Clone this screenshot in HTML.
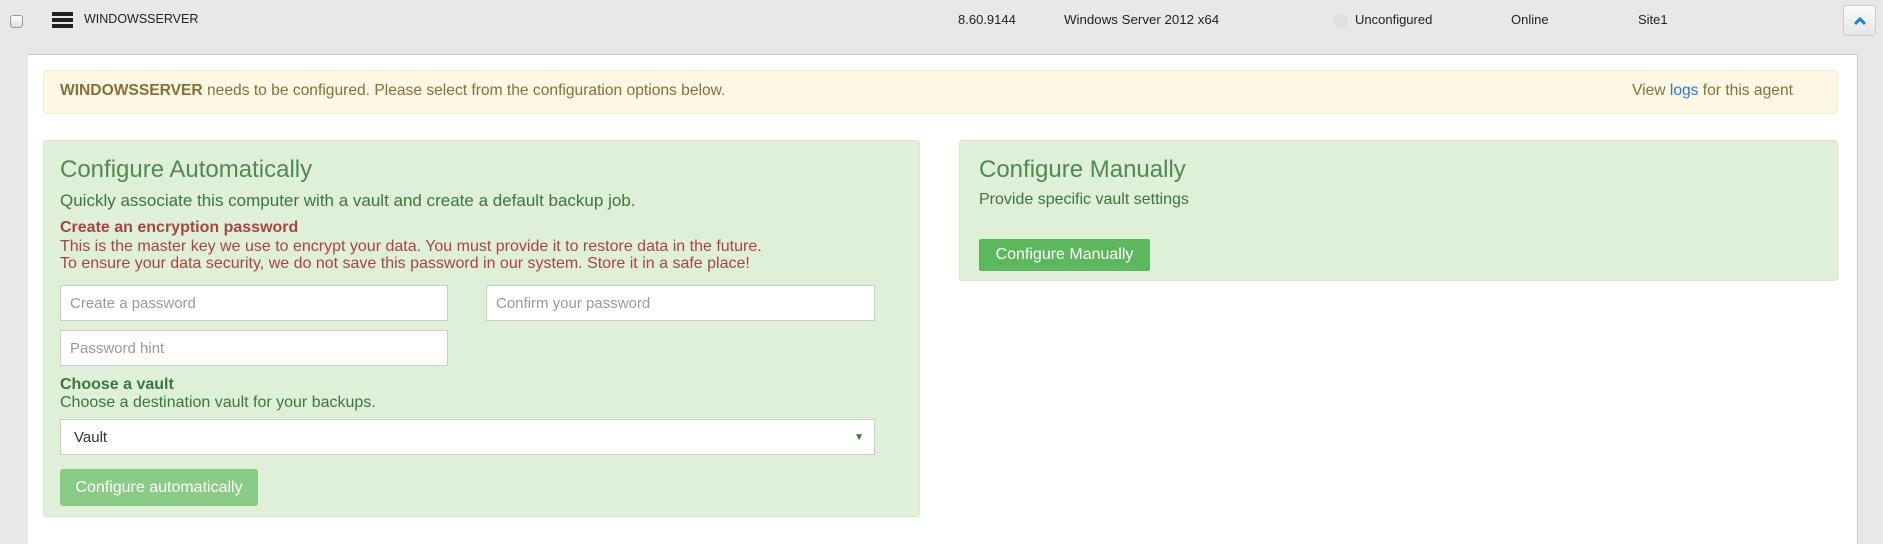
<!DOCTYPE html>
<html><head><meta charset="utf-8"><style>
*{box-sizing:border-box;margin:0;padding:0}
body{width:1883px;height:533px;overflow:hidden;background:#e8e8e8;font-family:"Liberation Sans",sans-serif;position:relative}
.a{position:absolute;white-space:nowrap}
.hdr{font-size:13px;color:#222;top:12px}
.panel{position:absolute;left:28px;top:54px;width:1830px;height:490px;background:#fff;border-top:1px solid #c8c8c8;border-right:1px solid #c8c8c8}
.alert{position:absolute;left:43px;top:70px;width:1795px;height:44px;background:#fcf8e3;border:1px solid #faebcc;border-radius:3px}
.box{position:absolute;background:#dff0d8;border:1px solid #d6e9c6;border-radius:3px}
.title{font-size:24px;color:#4f8a4f;font-weight:300}
.g{color:#3c763d;font-size:16px}
.r{color:#a94442;font-size:16px}
.inp{position:absolute;background:#fff;border:1px solid #ccc;font-size:15px;color:#999;padding-left:9px;display:flex;align-items:center}
.btn{position:absolute;color:#fff;font-size:16px;display:flex;align-items:center;justify-content:center;border-radius:3px}
</style></head><body>
<div class="a" style="left:10px;top:15px;width:13px;height:13px;border:1px solid #999;border-radius:3px;background:linear-gradient(#fff,#ddd)"></div>
<div class="a" style="left:52px;top:12px;width:21px;height:16px">
<div style="height:4px;background:#222;margin-bottom:2px"></div><div style="height:4px;background:#222;margin-bottom:2px"></div><div style="height:4px;background:#222"></div></div>
<div class="a hdr" style="left:84px;font-size:12.5px">WINDOWSSERVER</div>
<div class="a hdr" style="left:958px">8.60.9144</div>
<div class="a hdr" style="left:1064px;font-size:13.3px">Windows Server 2012 x64</div>
<div class="a" style="left:1334px;top:14px;width:14px;height:14px;border-radius:50%;background:#e0e0e0"></div>
<div class="a hdr" style="left:1355px">Unconfigured</div>
<div class="a hdr" style="left:1511px">Online</div>
<div class="a hdr" style="left:1638px">Site1</div>
<div class="a" style="left:1843px;top:5px;width:33px;height:31px;border:1px solid #ccc;border-radius:3px;background:linear-gradient(#fafafa,#e6e6e6);text-align:center">
<svg width="12" height="10" viewBox="0 0 12 10" style="margin-top:10px"><path d="M1 8 L6 3 L11 8" stroke="#1a7fd0" stroke-width="3" fill="none"/></svg></div>
<div class="panel"></div>
<div class="alert"></div>
<div class="a" style="left:60px;top:82px;font-size:15.6px;color:#8a6d3b"><b>WINDOWSSERVER</b> needs to be configured. Please select from the configuration options below.</div>
<div class="a" style="left:1632px;top:82px;font-size:15.6px;color:#8a6d3b">View <span style="color:#2a7ad0">logs</span> for this agent</div>
<div class="box" style="left:43px;top:140px;width:877px;height:377px"></div>
<div class="box" style="left:959px;top:140px;width:879px;height:141px"></div>
<div class="a title" style="left:60px;top:156px">Configure Automatically</div>
<div class="a g" style="left:60px;top:191px;font-size:17px">Quickly associate this computer with a vault and create a default backup job.</div>
<div class="a r" style="left:60px;top:219px;font-weight:bold">Create an encryption password</div>
<div class="a r" style="left:60px;top:238px">This is the master key we use to encrypt your data. You must provide it to restore data in the future.</div>
<div class="a r" style="left:60px;top:255px">To ensure your data security, we do not save this password in our system. Store it in a safe place!</div>
<div class="inp" style="left:60px;top:285px;width:388px;height:36px">Create a password</div>
<div class="inp" style="left:486px;top:285px;width:389px;height:36px">Confirm your password</div>
<div class="inp" style="left:60px;top:330px;width:388px;height:36px">Password hint</div>
<div class="a g" style="left:60px;top:376px;font-weight:bold">Choose a vault</div>
<div class="a g" style="left:60px;top:394px">Choose a destination vault for your backups.</div>
<div class="inp" style="left:60px;top:419px;width:815px;height:36px;color:#333;padding-left:13px">Vault<span style="position:absolute;right:10px;font-size:10px;color:#3c763d">&#9660;</span></div>
<div class="btn" style="left:60px;top:469px;width:198px;height:37px;background:#8acb86">Configure automatically</div>
<div class="a title" style="left:979px;top:156px">Configure Manually</div>
<div class="a g" style="left:979px;top:191px">Provide specific vault settings</div>
<div class="btn" style="left:979px;top:239px;width:171px;height:32px;background:#5cb85c;border-radius:2px">Configure Manually</div>
</body></html>
